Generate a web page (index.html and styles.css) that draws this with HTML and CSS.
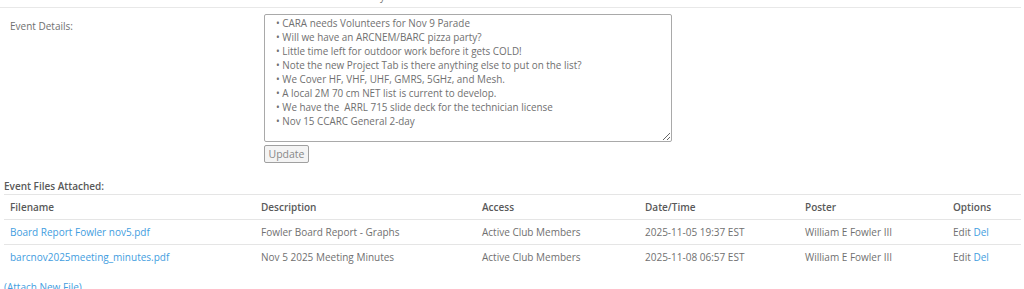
FILE: index.html
```html
<!DOCTYPE html>
<html>
<head>
<meta charset="utf-8"/>
    <title>Event</title>
    <link rel="stylesheet" href="styles.css">
</head>
<body>
<div class="page">
    <div class="row row-top"><span class="cut">y</span></div>
    <div class="row row-details">
        <label for="details" class="title">Event Details:</label>
        <div class="field">
            <textarea id="details" name="details">• CARA needs Volunteers for Nov 9 Parade
• Will we have an ARCNEM/BARC pizza party?
• Little time left for outdoor work before it gets COLD!
• Note the new Project Tab is there anything else to put on the list?
• We Cover HF, VHF, UHF, GMRS, 5GHz, and Mesh.
• A local 2M 70 cm NET list is current to develop.
• We have the  ARRL 715 slide deck for the technician license
• Nov 15 CCARC General 2-day</textarea>
            <button type="submit" class="btn">Update</button>
        </div>
    </div>

    <div class="files">
        <h4>Event Files Attached:</h4>
        <table>
            <tr>
                <th class="c-name">Filename</th>
                <th class="c-desc">Description</th>
                <th class="c-acc">Access</th>
                <th class="c-date">Date/Time</th>
                <th class="c-post">Poster</th>
                <th>Options</th>
            </tr>
            <tr>
                <td><a href="#">Board Report Fowler nov5.pdf</a></td>
                <td>Fowler Board Report - Graphs</td>
                <td>Active Club Members</td>
                <td>2025-11-05 19:37 EST</td>
                <td>William E Fowler III</td>
                <td>Edit <a href="#">Del</a></td>
            </tr>
            <tr>
                <td><a href="#">barcnov2025meeting_minutes.pdf</a></td>
                <td>Nov 5 2025 Meeting Minutes</td>
                <td>Active Club Members</td>
                <td>2025-11-08 06:57 EST</td>
                <td>William E Fowler III</td>
                <td>Edit <a href="#">Del</a></td>
            </tr>
        </table>
        <a href="#" class="attach">(Attach New File)</a>
    </div>
</div>
</body>
</html>
```

FILE: styles.css
```css
body {
    margin: 0;
    font-family: "Open Sans", "Liberation Sans", sans-serif;
    font-size: 10px;
    color: #707070;
    background: #fff;
}

a {
    color: #429de0;
    text-decoration: none;
}

.page {
    width: 1021px;
}

.row {
    border-bottom: 1px solid #e8e8e8;
}

.row-top {
    height: 7px;
    overflow: hidden;
    position: relative;
}

.cut {
    position: absolute;
    left: 380px;
    top: -11px;
    line-height: 15px;
}

.row-details {
    display: flex;
    border-bottom: none;
    padding-top: 6px;
}

.title {
    width: 264px;
    padding-left: 10px;
    padding-top: 5px;
    line-height: 15px;
    box-sizing: border-box;
}

.field {
    display: flex;
    flex-direction: column;
    align-items: flex-start;
}

textarea {
    width: 408px;
    height: 128px;
    box-sizing: border-box;
    border: 1px solid #a9a9a9;
    border-radius: 2px;
    padding: 1px 2px 1px 11px;
    font-family: "Open Sans", "Liberation Sans", sans-serif;
    font-size: 9.9px;
    line-height: 14px;
    color: #707070;
    resize: both;
}

.btn {
    margin-top: 3px;
    width: 45px;
    height: 18px;
    padding: 0;
    border: 1px solid #a0a0a0;
    border-radius: 2px;
    background: #f4f4f4;
    color: #888;
    font-family: "Open Sans", "Liberation Sans", sans-serif;
    font-size: 10.5px;
    line-height: 14px;
}

.files {
    padding-left: 4px;
    margin-top: 16px;
}

.files h4 {
    margin: 0;
    font-size: 10px;
    line-height: 15px;
    font-weight: 600;
    color: #595959;
}

table {
    width: 100%;
    border-collapse: collapse;
    margin-bottom: 11px;
}

th, td {
    text-align: left;
    padding: 5px 6px;
    line-height: 14px;
    border-top: 1px solid #e5e5e5;
    white-space: nowrap;
}

th {
    color: #595959;
    font-weight: 600;
}

.c-name { width: 239px; }
.c-desc { width: 209px; }
.c-acc { width: 151px; }
.c-date { width: 148px; }
.c-post { width: 136px; }

.attach {
    display: block;
    line-height: 15px;
}
```
